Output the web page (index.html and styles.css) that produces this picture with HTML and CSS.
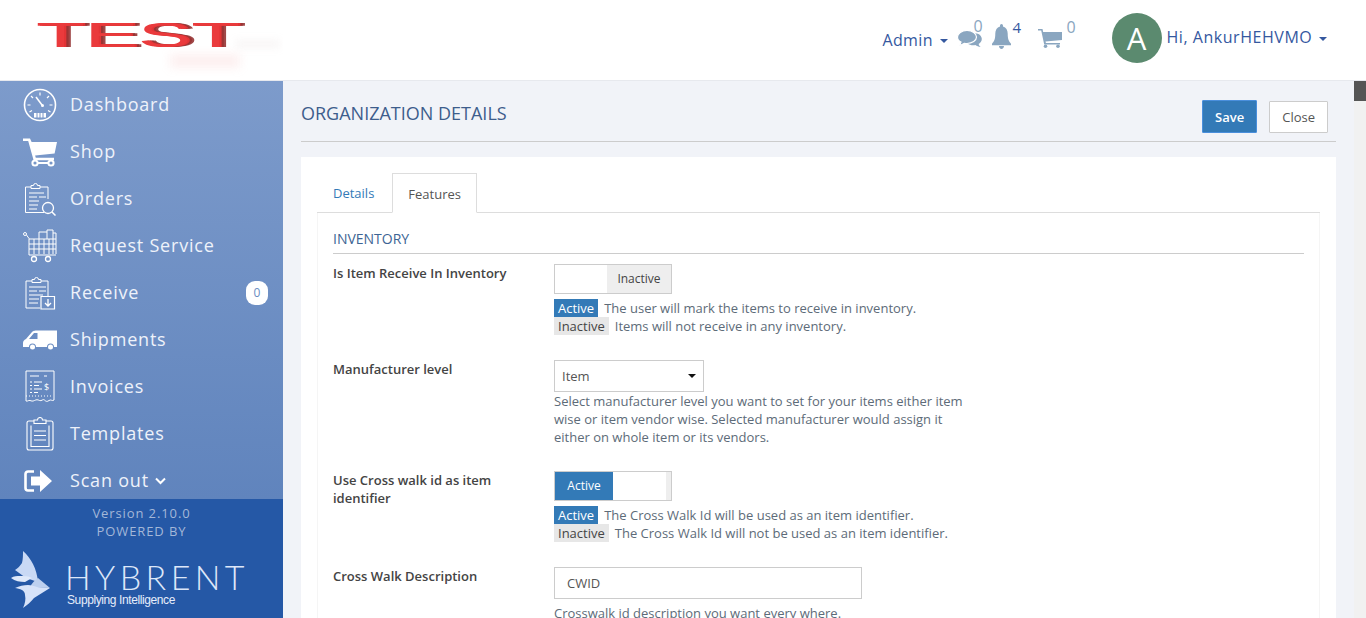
FILE: index.html
```html
<!DOCTYPE html>
<html lang="en">
<head>
    <meta charset="UTF-8">
    <meta name="viewport" content="width=device-width, initial-scale=1.0">
    <title>Organization Details</title>
    <link rel="stylesheet" href="styles.css">
</head>
<body>
    <header class="topbar">
        <div class="brand"><span class="brand-text">TEST</span></div>
        <nav class="top-nav">
            <a class="top-link admin-link">Admin <span class="caret"></span></a>
            <a class="top-icon comments-icon">
                <svg width="25" height="18" viewBox="0 0 25 18"><path fill="#8aa6c0" d="M24.800 9c0 2-1.200 3.800-3.200 5 .3 1.200 1 2.200 2 3-2-.2-3.900-1-5.200-2-.8.100-1.500.2-2.300.2-4 0-8-2.500-8-6s4-6 8-6h2c4 0 6.700 3 6.700 5.800z"/><path fill="#8aa6c0" stroke="#fff" stroke-width="1.200" d="M10 .5c5.300 0 9.500 3 9.500 6.500s-4.200 6.500-9.500 6.500c-.9 0-1.700-.1-2.500-.2C6 14.600 3.800 15.300 1.800 15.500c1-.9 1.900-2.100 2.200-3.400C1.600 10.900 .5 9.100 .5 7 .5 3.500 4.700 .5 10 .5z"/></svg>
                <span class="top-count count-pale">0</span>
            </a>
            <a class="top-icon bell-icon">
                <svg width="19" height="25" viewBox="0 0 23 26" preserveAspectRatio="none"><path fill="#8aa6c0" d="M11.500 0c1 0 1.800.8 1.800 1.800v.7c3.800.8 5.700 3.700 5.700 7.500 0 6 1.500 8.200 4 10.500v1.500H0V20.500c2.500-2.300 4-4.500 4-10.500 0-3.800 1.900-6.700 5.700-7.500v-.7c0-1 .8-1.800 1.800-1.800zM8.500 23h6c0 1.700-1.300 3-3 3s-3-1.300-3-3z"/></svg>
                <span class="top-count count-dark">4</span>
            </a>
            <a class="top-icon cart-icon">
                <svg width="24" height="19" viewBox="0 0 24 19"><path fill="#8aa6c0" d="M0 0h4.500l.7 3H24v8l-16.500 1.500.4 1.500H22v1.500H6.200L3.200 1.500H0z"/><circle fill="#8aa6c0" cx="7.500" cy="17.200" r="1.800"/><circle fill="#8aa6c0" cx="20" cy="17.200" r="1.800"/></svg>
                <span class="top-count count-pale">0</span>
            </a>
            <span class="avatar">A</span>
            <a class="top-link user-link">Hi, AnkurHEHVMO <span class="caret"></span></a>
        </nav>
    </header>

    <div class="shell">
        <aside class="sidebar">
            <ul class="side-menu">
                <li class="side-item">
                    <svg class="side-icon" viewBox="0 0 34 34"><g fill="none" stroke="#fff"><circle cx="17" cy="17" r="15.500" stroke-width="1.600"/><path stroke-width="1.200" d="M17 4.500v3M8 8l2 2M26 8l-2 2M4.500 17h3M26.500 17h3M6.500 24l2.500-1.500M27.500 24L25 22.500"/><path stroke-width="1.600" d="M13 9l6 8"/></g><circle cx="19.500" cy="17.500" r="1.500" fill="#fff"/><path fill="#fff" d="M11 25h12v4.500H11z"/><path stroke="#7693c6" d="M14 25v5M17 25v5M20 25v5"/></svg>
                    <span class="side-label">Dashboard</span>
                </li>
                <li class="side-item">
                    <svg class="side-icon" viewBox="0 0 34 34"><path fill="#fff" d="M0 3.500h7l1.600 3.500H34l-2.400 11.500-19.500 2 .7 2.300H31v2.500H10.600L5.200 6H0z"/><circle cx="12" cy="28" r="2.600" fill="none" stroke="#fff" stroke-width="2"/><circle cx="28" cy="28" r="2.600" fill="none" stroke="#fff" stroke-width="2"/><path stroke="#fff" stroke-width="2" d="M14 28h12"/></svg>
                    <span class="side-label">Shop</span>
                </li>
                <li class="side-item">
                    <svg class="side-icon" viewBox="0 0 34 34"><g fill="none" stroke="#fff" stroke-width="1"><path d="M21 30.500H2.500V5H8M17 5h8v12"/><path d="M8 6.500V3.500h2.500a2 2 0 0 1 4 0H17v3z"/><path d="M6 11h15M6 15h8M16 15h7M6 19h10M6 23h9M6 27h8"/><circle cx="25" cy="26" r="5.500" stroke-width="1.300"/><path stroke-width="1.500" d="M29 30l3.500 3.500"/></g></svg>
                    <span class="side-label">Orders</span>
                </li>
                <li class="side-item">
                    <svg class="side-icon" viewBox="0 0 34 34"><g fill="none" stroke="#fff" stroke-width="1"><circle cx="2" cy="5" r="1.500"/><path d="M3.500 6L6 9.500V26h27M6 10h27v15M11 10v15M16 10v15M21 10v15M26 10v15M30 10v15M6 15h27M6 20h27"/><path d="M16 10V3h8v-2h6v3h3v6"/><path d="M24 3v7M30 4v6"/><circle cx="11" cy="30" r="2.500" stroke-width="1.300"/><circle cx="25" cy="30" r="2.500" stroke-width="1.300"/></g></svg>
                    <span class="side-label">Request Service</span>
                </li>
                <li class="side-item">
                    <svg class="side-icon" viewBox="0 0 34 34"><g fill="none" stroke="#fff" stroke-width="1"><path d="M17 32H3V5h6M18 5h7v15"/><path d="M9 6.500V3.500h2.500a2 2 0 0 1 4 0H18v3z"/><path d="M6 11h17M6 15h8M16 15h7M6 19h14M6 23h10M6 27h9"/><path stroke-width="1.200" d="M18 20.500h13.500V33H18z"/><path stroke-width="1.300" d="M25 23v7M22 27l3 3 3-3"/></g></svg>
                    <span class="side-label">Receive</span>
                    <span class="side-badge">0</span>
                </li>
                <li class="side-item">
                    <svg class="side-icon" viewBox="0 0 34 34"><path fill="#fff" d="M16 7.500h18V24h-3a3.500 3.500 0 0 0-7 0H13a3.500 3.500 0 0 0-7 0H0v-4c0-2 1-3 3-4l6-7c1.500-1.500 3-1.500 7-1.500zM14.500 10H11l-5 6h8.500z"/><circle cx="9.500" cy="24" r="2.500" fill="#fff"/><circle cx="27.500" cy="24" r="2.500" fill="#fff"/></svg>
                    <span class="side-label">Shipments</span>
                </li>
                <li class="side-item">
                    <svg class="side-icon" viewBox="0 0 34 34"><g fill="none" stroke="#fff"><path stroke-width="1" d="M3 31V1h28v29c-2 1.500-3-1-5 .5s-3 1-4.500-.5-3 1.500-5 .5-3-1-5 0-3 .5-4.500 0-2 1-4 .5z"/><path stroke-width="1.200" d="M7 6h9M21 6h3M7 12h2M11 12h8M7 15.500h2M11 15.500h5M7 19h2M11 19h8M7 22.500h2M11 22.500h4M3 26h1M6 26h1M9 26h1M12 26h1M15 26h1M18 26h1M21 26h1M24 26h1M27 26h1"/></g><text class="invoice-dollar" x="21" y="20">$</text></svg>
                    <span class="side-label">Invoices</span>
                </li>
                <li class="side-item">
                    <svg class="side-icon" viewBox="0 0 34 34"><g fill="none" stroke="#fff" stroke-width="1.100"><path d="M11 4H6a2 2 0 0 0-2 2v25a2 2 0 0 0 2 2h22a2 2 0 0 0 2-2V6a2 2 0 0 0-2-2h-5"/><path d="M11 6.500V3h3.500a2.500 2.500 0 0 1 5 0H23v3.500z"/><path d="M8 8.500v21h18v-21M11 14h12M11 18.500h12M11 23h12"/></g></svg>
                    <span class="side-label">Templates</span>
                </li>
                <li class="side-item">
                    <svg class="side-icon" viewBox="0 0 34 34"><path fill="none" stroke="#fff" stroke-width="2.600" d="M11 7.500H5a2.500 2.500 0 0 0-2.500 2.500v14a2.500 2.500 0 0 0 2.500 2.500h6"/><path fill="#fff" d="M8 12.500h9V6l12 11-12 11v-6.500H8z"/></svg>
                    <span class="side-label">Scan out</span>
                    <svg class="side-chevron" width="11" height="8" viewBox="0 0 11 8"><path fill="none" stroke="#fff" stroke-width="2" d="M1 1.500l4.500 4.500L10 1.500"/></svg>
                </li>
            </ul>
            <div class="side-footer">
                <div class="version">Version 2.10.0</div>
                <div class="powered">POWERED BY</div>
                <div class="hybrent">
                    <svg class="hybrent-mark" width="40" height="58" viewBox="0 0 40 58"><path fill="#c9d9f5" d="M12 0c8 7 14 18 15 31l-12-4-11-8c3-2 5-4 7-7 1-4 1-8 1-12z"/><path fill="#dfe9fa" d="M0 27c3-2 6-2 9-2 4 0 8 0 12 2l-7 4c-5 0-10-1-14-4z"/><path fill="#bdd0ef" d="M27 27l12 10-20-1c2-4 5-7 8-9z"/><path fill="#d7e3f9" d="M4 37c4-2 9-3 13-3 3 0 6 1 9 2l13 1-16 10c-3 4-7 7-11 10 2-4 3-9 2-13 0-2-1-4-3-5-2-1-5-2-7-2z"/></svg>
                    <div class="hybrent-text">
                        <div class="hybrent-name">HYBRENT</div>
                        <div class="hybrent-tag">Supplying Intelligence</div>
                    </div>
                </div>
            </div>
        </aside>

        <main class="content">
            <div class="page-head">
                <h1 class="page-title">ORGANIZATION DETAILS</h1>
                <div class="page-actions">
                    <button class="btn btn-save">Save</button>
                    <button class="btn btn-close">Close</button>
                </div>
            </div>

            <section class="card">
                <ul class="tabs">
                    <li class="tab">Details</li>
                    <li class="tab tab-active">Features</li>
                </ul>
                <div class="tab-body">
                    <h2 class="section-title">INVENTORY</h2>

                    <div class="form-row">
                        <label class="form-label">Is Item Receive In Inventory</label>
                        <div class="form-value">
                            <div class="switch"><span class="switch-blank"></span><span class="switch-off">Inactive</span></div>
                            <div class="legend">
                                <div><span class="tag tag-on">Active</span><span class="legend-text">The user will mark the items to receive in inventory.</span></div>
                                <div><span class="tag tag-off">Inactive</span><span class="legend-text">Items will not receive in any inventory.</span></div>
                            </div>
                        </div>
                    </div>

                    <div class="form-row">
                        <label class="form-label">Manufacturer level</label>
                        <div class="form-value">
                            <div class="select-box">Item<span class="select-arrow"></span></div>
                            <p class="help">Select manufacturer level you want to set for your items either item wise or item vendor wise. Selected manufacturer would assign it either on whole item or its vendors.</p>
                        </div>
                    </div>

                    <div class="form-row">
                        <label class="form-label">Use Cross walk id as item identifier</label>
                        <div class="form-value">
                            <div class="switch"><span class="switch-on">Active</span><span class="switch-blank"></span><span class="switch-end"></span></div>
                            <div class="legend">
                                <div><span class="tag tag-on">Active</span><span class="legend-text">The Cross Walk Id will be used as an item identifier.</span></div>
                                <div><span class="tag tag-off">Inactive</span><span class="legend-text">The Cross Walk Id will not be used as an item identifier.</span></div>
                            </div>
                        </div>
                    </div>

                    <div class="form-row">
                        <label class="form-label">Cross Walk Description</label>
                        <div class="form-value">
                            <div class="text-box">CWID</div>
                            <p class="help">Crosswalk id description you want every where.</p>
                        </div>
                    </div>
                </div>
            </section>
        </main>
        <div class="scroll-track"><div class="scroll-thumb"></div></div>
    </div>
</body>
</html>
```

FILE: styles.css
```css
* {
    box-sizing: border-box;
}

body {
    font-family: 'Open Sans', sans-serif;
    display: flex;
    flex-direction: column;
    height: 100vh;
    margin: 0;
    overflow: hidden;
    background-color: #f1f3f8;
    color: #555;
}

/* top bar */
.topbar {
    display: flex;
    justify-content: space-between;
    flex: none;
    height: 81px;
    background-color: #fff;
    border-bottom: 1px solid #e7e9ee;
}

.brand {
    width: 283px;
    position: relative;
    overflow: hidden;
}

/* faint reflection under the logo */
.brand::before {
    content: "";
    position: absolute;
    left: 235px;
    top: 41px;
    width: 45px;
    height: 6px;
    background-color: rgba(190, 160, 160, 0.14);
    filter: blur(4px);
}

.brand::after {
    content: "";
    position: absolute;
    left: 170px;
    top: 54px;
    width: 70px;
    height: 14px;
    background-color: rgba(240, 150, 150, 0.14);
    filter: blur(5px);
}

.brand-text {
    position: absolute;
    left: 36px;
    top: 15px;
    width: 92px;
    font-family: 'Liberation Sans', sans-serif;
    font-size: 35px;
    font-weight: 400;
    line-height: 40px;
    color: #ea3a3c;
    text-shadow: 1px 0 0 #e23436, 2px 0 0 #9b3434, 3px 0 0 #a04848;
    transform: scaleX(2.28);
    transform-origin: left center;
}

.top-nav {
    display: flex;
    align-items: center;
    height: 80px;
    padding-right: 39px;
}

.top-link {
    font-size: 16px;
    color: #35589f;
}

.admin-link {
    margin-top: -1px;
    margin-right: 9px;
    letter-spacing: 0.4px;
}

.caret {
    display: inline-block;
    width: 0;
    height: 0;
    margin-left: 2px;
    vertical-align: middle;
    border-top: 4px solid #35589f;
    border-left: 4px solid transparent;
    border-right: 4px solid transparent;
}

.top-icon {
    display: flex;
    position: relative;
}

.top-count {
    position: absolute;
    font-size: 16px;
    line-height: 16px;
}

.count-pale {
    color: #8aa6c0;
}

.count-dark {
    color: #35589f;
}

.comments-icon {
    margin: -2px 10px 0 0;
}

.comments-icon .top-count {
    left: 17px;
    top: -12px;
}

.bell-icon {
    margin: -7px 27px 0 0;
}

.bell-icon .top-count {
    left: 21px;
    top: -5px;
    font-size: 15px;
}

.cart-icon {
    margin: -3px 50px 0 0;
}

.cart-icon .top-count {
    left: 29px;
    top: -10px;
}

.avatar {
    display: flex;
    align-items: center;
    justify-content: center;
    width: 50px;
    height: 50px;
    margin: -4px 5px 0 0;
    border-radius: 50%;
    background-color: #5b8a6f;
    color: #fff;
    font-size: 31px;
}

.user-link {
    margin-top: -6px;
    letter-spacing: 0.54px;
}

/* sidebar and main area */
.shell {
    display: flex;
    flex: 1;
    min-height: 0;
}

.sidebar {
    display: flex;
    flex-direction: column;
    flex: none;
    width: 283px;
}

.side-menu {
    flex: 1;
    min-height: 0;
    margin: 0;
    padding: 0;
    overflow: hidden;
    list-style: none;
    background: linear-gradient(#7d9bcb, #6084bd);
}

.side-item {
    display: flex;
    align-items: center;
    height: 47px;
    padding: 0 15px 0 23px;
    color: #eef2fa;
    font-size: 18px;
    letter-spacing: 0.8px;
}

.side-label {
    margin-top: -2px;
}

.side-icon {
    flex: none;
    width: 34px;
    height: 34px;
    margin-right: 13px;
}

.invoice-dollar {
    font-family: 'Open Sans', sans-serif;
    font-size: 9px;
    fill: #fff;
    letter-spacing: 0;
}

.side-badge {
    display: flex;
    align-items: center;
    justify-content: center;
    width: 22px;
    height: 24px;
    margin-left: auto;
    border-radius: 9px;
    background-color: #fff;
    color: #6a8dc2;
    font-size: 12px;
    letter-spacing: 0;
}

.side-chevron {
    margin: 0 0 0 6px;
}

.side-footer {
    flex: none;
    height: 119px;
    padding-top: 5px;
    background-color: #2558a6;
    color: #a3b7d8;
    text-align: center;
    font-size: 13px;
    line-height: 18px;
    letter-spacing: 0.9px;
}

.hybrent {
    display: flex;
    margin-top: 11px;
    padding-left: 11px;
    text-align: left;
    letter-spacing: 0;
}

.hybrent-mark {
    flex: none;
    margin-right: 14px;
}

.hybrent-name {
    margin-top: 12px;
    margin-bottom: 2px;
    font-family: Lato, sans-serif;
    font-size: 34px;
    font-weight: 300;
    line-height: 28px;
    letter-spacing: 4.400px;
    color: #dde7f9;
}

.hybrent-tag {
    margin-left: 2px;
    font-family: 'Liberation Sans', sans-serif;
    font-size: 12px;
    line-height: 14px;
    letter-spacing: -0.4px;
    color: #e6edfb;
}

.content {
    flex: 1;
    min-width: 0;
    padding: 0 18px;
    overflow: hidden;
}

.page-head {
    display: flex;
    align-items: center;
    justify-content: space-between;
    height: 61px;
    padding: 3px 8px 0 0;
    border-bottom: 1px solid #ccc;
}

.page-title {
    margin: 0;
    font-size: 18px;
    font-weight: 400;
    color: #3d5d8c;
}

.page-actions {
    display: flex;
    align-items: flex-start;
    gap: 12px;
    margin-top: 8px;
}

.btn {
    height: 32px;
    padding: 0 12px;
    font-family: 'Open Sans', sans-serif;
    font-size: 13px;
    border-radius: 1px;
}

.btn-save {
    height: 33px;
    border: 1px solid #4a8fdc;
    background-color: #337ab7;
    color: #fff;
    font-weight: 600;
}

.btn-close {
    margin-top: 1px;
    border: 1px solid #ccc;
    background-color: #fff;
    color: #555;
}

.card {
    margin-top: 15px;
    padding: 16px 16px 0;
    background-color: #fff;
}

.tabs {
    display: flex;
    height: 40px;
    margin: 0;
    padding: 0;
    list-style: none;
    border-bottom: 1px solid #ddd;
    font-size: 13px;
}

.tab {
    margin-right: 2px;
    padding: 0 16px;
    line-height: 40px;
    color: #337ab7;
}

.tab-active {
    height: 40px;
    margin-right: 0;
    padding: 0 15px;
    border: 1px solid #ddd;
    border-bottom: 1px solid #fff;
    color: #555;
}

.tab-body {
    padding: 16px 15px 0;
    border-left: 1px solid #f5f5f5;
    border-right: 1px solid #f5f5f5;
}

.section-title {
    margin: 0 0 10px;
    padding-bottom: 4px;
    border-bottom: 1px solid #ccc;
    font-size: 14px;
    font-weight: 400;
    line-height: 20px;
    color: #3d6494;
}

.form-row {
    display: flex;
    margin-bottom: 25px;
    font-size: 13px;
    line-height: 18px;
}

.form-label {
    flex: none;
    width: 221px;
    padding: 0 40px 0 0;
    font-weight: 600;
    color: #444;
}

.form-value {
    flex: 1;
    min-width: 0;
}

.switch {
    display: flex;
    width: 118px;
    height: 30px;
    border: 1px solid #ccc;
    font-size: 12px;
    line-height: 28px;
    text-align: center;
}

.switch-blank {
    flex: 1;
}

.switch-off {
    width: 64px;
    background-color: #eee;
    color: #444;
}

.switch-on {
    width: 58px;
    background-color: #337ab7;
    color: #fff;
}

.switch-end {
    width: 5px;
    background-color: #eee;
}

.legend {
    margin-top: 5px;
    color: #5d6b78;
}

.tag {
    display: inline-block;
    padding: 0 4px;
}

.tag-on {
    background-color: #337ab7;
    color: #fff;
}

.tag-off {
    background-color: #e7e7e7;
    color: #444;
}

.legend-text {
    margin-left: 6px;
}

.select-box {
    position: relative;
    width: 150px;
    height: 32px;
    padding-left: 7px;
    border: 1px solid #ccc;
    line-height: 31px;
    color: #555;
    background-color: #fff;
}

.select-arrow {
    position: absolute;
    right: 7px;
    top: 13px;
    border-top: 4px solid #111;
    border-left: 4px solid transparent;
    border-right: 4px solid transparent;
}

.help {
    max-width: 420px;
    margin: 0;
    color: #5d6b78;
}

.text-box {
    width: 308px;
    height: 32px;
    margin-bottom: 5px;
    padding-left: 12px;
    border: 1px solid #ccc;
    line-height: 30px;
    color: #555;
}

.scroll-track {
    flex: none;
    width: 12px;
    background-color: #f1f1f1;
}

.scroll-thumb {
    height: 20px;
    background-color: #555;
}
```
